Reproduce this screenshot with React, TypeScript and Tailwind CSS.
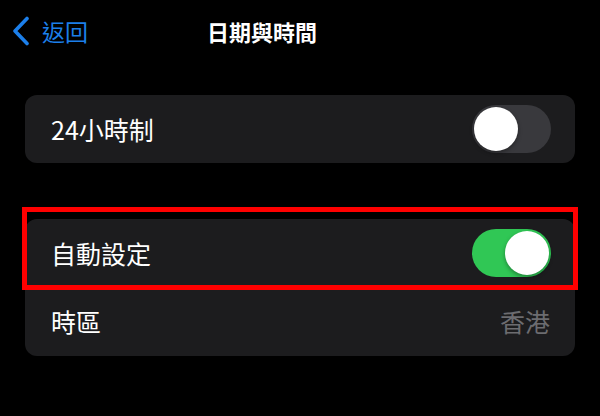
function Toggle({ on }: { on: boolean }) {
  return (
    <div
      className={
        on
          ? "flex h-[48px] w-[79px] items-center justify-end rounded-full bg-[#30c755] px-[2px]"
          : "flex h-[48px] w-[79px] items-center justify-start rounded-full bg-[#39393d] px-[2px]"
      }
    >
      <div className="h-[44px] w-[44px] rounded-full bg-white shadow-[0_2px_4px_rgba(0,0,0,0.35)]" />
    </div>
  );
}

export default function App() {
  return (
    <div className="h-[416px] w-[600px] overflow-hidden bg-black font-['Noto_Sans_CJK_TC','Noto_Sans',sans-serif] text-white">
      <header className="flex h-[62px] items-center">
        <div className="flex w-[207px] items-center pl-[12px] text-[#1c7fea]">
          <svg width="18" height="30" viewBox="0 0 18 30" fill="none">
            <path d="M15 2.5 L3 15 L15 27.5" stroke="currentColor" strokeWidth="3.6" strokeLinecap="round" strokeLinejoin="round" />
          </svg>
          <span className="ml-[12px] text-[23px] leading-none">返回</span>
        </div>
        <h1 className="text-[22px] font-semibold leading-none">日期與時間</h1>
      </header>

      <div className="mt-[33px] px-[25px]">
        <div className="flex h-[68px] items-center justify-between rounded-[12px] bg-[#1c1c1e] pl-[26px] pr-[24px]">
          <span className="text-[25px] leading-none">24小時制</span>
          <Toggle on={false} />
        </div>

        <div className="mt-[56px] rounded-[12px] bg-[#1c1c1e]">
          <div className="relative flex h-[68px] items-center justify-between pl-[26px] pr-[24px]">
            <span className="text-[25px] leading-none">自動設定</span>
            <Toggle on />
            <div className="absolute -bottom-[3px] -left-[3px] -right-[3px] -top-[12px] border-[5px] border-[#ff0000]" />
          </div>
          <div className="flex h-[69px] items-center justify-between pl-[26px] pr-[25px]">
            <span className="text-[25px] leading-none">時區</span>
            <span className="text-[25px] leading-none text-[#6c6c70]">香港</span>
          </div>
        </div>
      </div>
    </div>
  );
}
